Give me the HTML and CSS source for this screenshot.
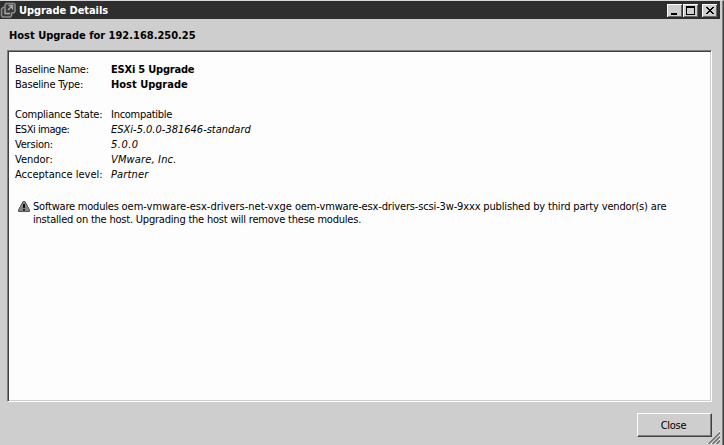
FILE: index.html
```
<!DOCTYPE html>
<html lang="en">
<head>
<meta charset="utf-8">
<title>Upgrade Details</title>
<link rel="stylesheet" href="styles.css">
</head>
<body>
<div class="window">
  <header class="titlebar">
    <svg class="app-icon" width="16" height="16" viewBox="0 0 16 16" fill="none">
      <path d="M6 1.500h8l1 1v7l-1.500 1.500h-2v2.500l-1 1.500h-8l-1-1v-7l1.500-1.500h2V3z" fill="#3a3a3a" stroke="#8c8c8c" stroke-width="1.500"/>
      <path d="M5 6.500v5h5M8 8l4-4M8.500 3.500h4v4" stroke="#aaa" stroke-width="1.400"/>
    </svg>
    <h1 class="title">Upgrade Details</h1>
    <div class="controls">
      <button class="control" aria-label="Minimize"><svg width="15" height="13"><path d="M4 9h6v2H4z"/></svg></button>
      <button class="control" aria-label="Maximize"><svg width="15" height="13"><path fill-rule="evenodd" d="M3 2h9v9H3zM4 4v6h7V4z"/></svg></button>
      <button class="control close-x" aria-label="Close window"><svg width="15" height="13"><path d="M4 3h2v1h1v1h2V4h1V3h2v1h-1v1h-1v1H9v1h1v1h1v1h1v1h-2V9H9V8H7v1H6v1H4V9h1V8h1V7h1V6H6V5H5V4H4z"/></svg></button>
    </div>
  </header>
  <h2 class="heading">Host Upgrade for 192.168.250.25</h2>
  <main class="panel">
    <dl class="details">
      <dt class="tight">Baseline Name:</dt><dd class="strong snug">ESXi 5 Upgrade</dd>
      <dt class="snug">Baseline Type:</dt><dd class="strong">Host Upgrade</dd>
      <dt class="gap snug">Compliance State:</dt><dd class="gap tight">Incompatible</dd>
      <dt class="tighter">ESXi image:</dt><dd class="em">ESXi-5.0.0-381646-standard</dd>
      <dt class="snug">Version:</dt><dd class="em loose">5.0.0</dd>
      <dt>Vendor:</dt><dd class="em wide">VMware, Inc.</dd>
      <dt>Acceptance level:</dt><dd class="em wide">Partner</dd>
    </dl>
    <div class="notice">
      <svg class="warning" width="12" height="11" viewBox="0 0 12 11"><path d="M5 .5h2L11.500 9v1.500H.500V9z" fill="#858585" stroke="#555"/><path d="M5 3h2v4H5zM5 8h2v1.500H5z" fill="#111"/></svg>
      <p><span class="snug">Software modules </span>oem-vmware-esx-drivers-net-vxge <span class="module">oem-vmware-esx-drivers-scsi-3w-9xxx published by third party vendor(s) are</span><br><span class="snug">installed on the host. Upgrading the host will remove these modules.</span></p>
    </div>
  </main>
  <footer class="footer"><button class="close tight">Close</button></footer>
  <svg class="grip" width="14" height="14" fill="none"><path d="M1 14L14 1M5 14l9-9M9 14l5-5" stroke="#fff"/><path d="M2.500 14L14 2.500M6.500 14L14 6.500M10.500 14l3.500-3.500" stroke="#777" stroke-width="1.800"/></svg>
</div>
</body>
</html>
```
FILE: styles.css
```
* { box-sizing: border-box; }
body { margin: 0; overflow: hidden; font: 11px/15px "DejaVu Sans Condensed", "DejaVu Sans", sans-serif; font-stretch: condensed; color: #000; }
h1, h2, p, dl, dd { margin: 0; font-size: 11px; }
button { font: inherit; color: inherit; padding: 0; border-radius: 0; }
.window { position: relative; width: 724px; height: 445px; display: flex; flex-direction: column; background: #cecece; border-top: 1px solid #d8d8d8; border-right: 1px solid #404040; box-shadow: inset -1px 0 #808080; }
.titlebar { display: flex; align-items: center; height: 18px; margin-right: 3px; background: #2e2e2e; color: #fff; }
.app-icon { margin-right: 3px; }
.title { flex: 1; line-height: 18px; padding-top: 1px; letter-spacing: -.06px; }
.controls { display: flex; gap: 1px; margin-right: 3px; }
.control { width: 15px; height: 13px; border: 0; background: #cecece; box-shadow: inset 1px 1px #fff, inset -1px -1px #666; display: flex; }
.close-x { margin-left: 3px; }
.heading { margin: 9px 0 7px 9px; line-height: 15px; }
.panel { width: 705px; height: 352px; margin-left: 7px; padding: 11px 6px; background: #fdfdfd; border: 1px solid; border-color: #808080 #fff #fff #808080; box-shadow: inset 1px 1px #404040, inset -1px -1px #cecece; }
.details { display: grid; grid-template-columns: 96px 1fr; padding-left: 1px; }
.gap { margin-top: 15px; }
.strong { font-weight: bold; }
.em { font-style: italic; }
.snug { letter-spacing: -.21px; }
.tight { letter-spacing: -.28px; }
.tighter { letter-spacing: -.45px; }
.module { letter-spacing: -.15px; }
.wide { letter-spacing: .15px; }
.loose { letter-spacing: .5px; }
.notice { display: flex; margin: 18px 0 0 4px; line-height: 13px; white-space: nowrap; }
.warning { margin: 1px 3px 0 0; }
.footer { display: flex; justify-content: flex-end; padding: 11px 11px 0 0; }
.close { width: 75px; height: 24px; padding-right: 2px; background: #cecece; border: 1px solid; border-color: #fff #404040 #404040 #fff; box-shadow: inset -1px -1px #808080; }
.grip { position: absolute; right: 3px; bottom: 1px; }
```
